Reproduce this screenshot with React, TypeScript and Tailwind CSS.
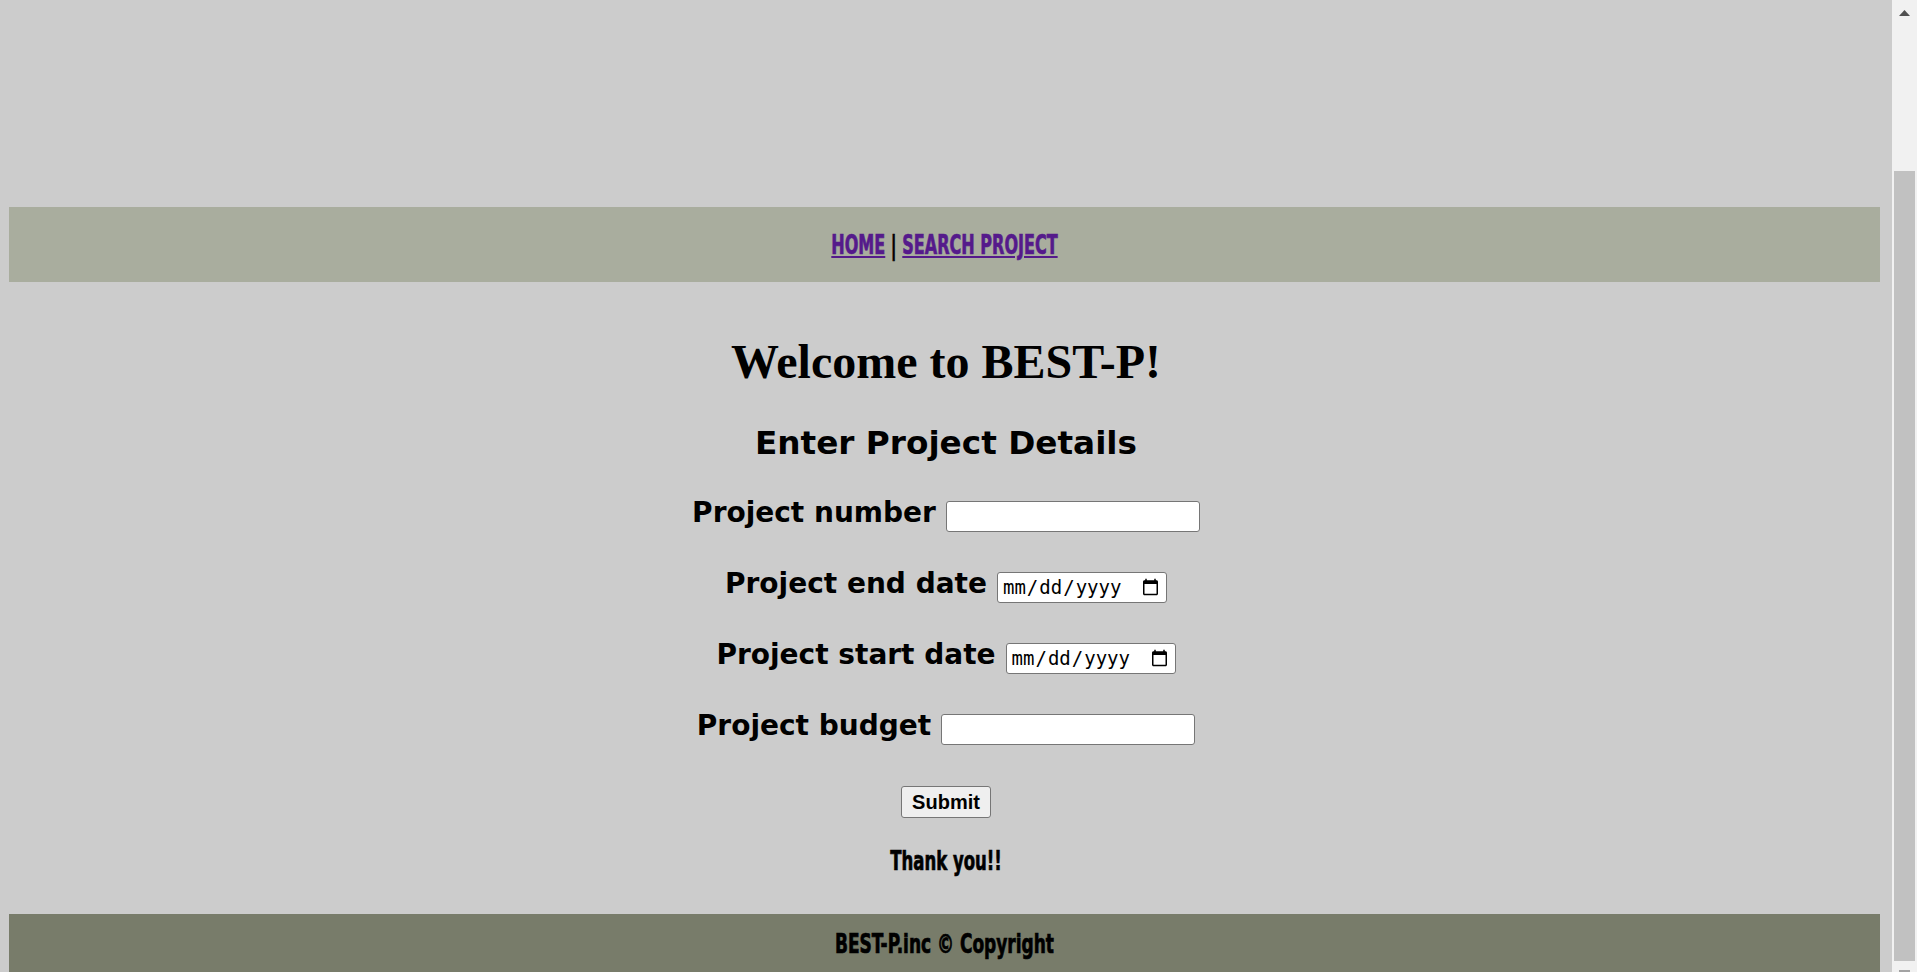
import React from 'react';

const condensed =
  "font-['DejaVu_Sans_Condensed','DejaVu_Sans',sans-serif] font-bold font-stretch-condensed [-webkit-text-stroke:0.7px_currentColor]";

function Row({ label, type }: { label: string; type: 'text' | 'date' }) {
  return (
    <div className="flex items-start justify-center gap-[10px]">
      <label className="font-['DejaVu_Sans',sans-serif] text-[28px] font-bold leading-[24px] text-black">{label}</label>
      {type === 'date' ? (
        <input
          type="date"
          className="h-[31px] w-[170px] rounded-[3px] border-[1.5px] border-[#767676] bg-white px-[4px] font-['DejaVu_Sans_Mono',monospace] text-[19px] text-black"
        />
      ) : (
        <input
          type="text"
          className="h-[31px] w-[254px] rounded-[3px] border-[1.5px] border-[#767676] bg-white px-[4px] text-[20px]"
        />
      )}
    </div>
  );
}

export default function App() {
  return (
    <div className="flex h-[972px] w-full overflow-hidden bg-[#cccccc]">
      {/* page */}
      <div className="flex min-w-0 flex-1 flex-col">
        <div className="h-[207px] shrink-0" />

        <nav className="ml-[9px] mr-[12px] flex h-[75px] shrink-0 items-center justify-center bg-[#a9ad9e]">
          <span className={`inline-block origin-center scale-x-[0.66] text-[27px] leading-none text-black ${condensed}`}>
            <a href="#" className="text-[#551a8b] underline">HOME</a> | <a href="#" className="text-[#551a8b] underline">SEARCH PROJECT</a>
          </span>
        </nav>

        <div className="flex flex-col items-center">
          <h1 className="mt-[56px] font-['Liberation_Serif',serif] text-[48px] font-bold leading-none text-black">Welcome to BEST-P!</h1>
          <h2 className="mt-[41px] font-['DejaVu_Sans',sans-serif] text-[32.7px] font-bold leading-none text-black">Enter Project Details</h2>

          <form className="mt-[41px] flex flex-col items-center" onSubmit={(e) => e.preventDefault()}>
            <div className="flex flex-col gap-[40px]">
              <Row label="Project number" type="text" />
              <Row label="Project end date" type="date" />
              <Row label="Project start date" type="date" />
              <Row label="Project budget" type="text" />
            </div>
            <button
              type="submit"
              className="mt-[41px] h-[32px] w-[90px] rounded-[3px] border-[1.5px] border-[#767676] bg-[#efefef] font-['Liberation_Sans',Arial,sans-serif] text-[20px] font-bold text-black"
            >
              Submit
            </button>
          </form>

          <p className={`mt-[29px] inline-block origin-center scale-x-[0.68] text-[27px] leading-none text-black ${condensed}`}>Thank you!!</p>
        </div>

        <footer className="ml-[9px] mr-[12px] mt-[40px] flex h-[75px] shrink-0 justify-center bg-[#787c6a] pt-[16px]">
          <span className={`inline-block h-[27px] origin-center scale-x-[0.7] text-[27px] leading-none text-black ${condensed}`}>BEST-P.inc © Copyright</span>
        </footer>
      </div>

      {/* scrollbar */}
      <div className="flex w-[25px] shrink-0 flex-col items-center bg-[#f1f1f1]">
        <svg width="11" height="6" viewBox="0 0 11 6" className="mt-[10px]">
          <polygon points="5.5,0 11,6 0,6" fill="#505050" />
        </svg>
        <div className="mt-[155px] h-[790px] w-[21px] bg-[#c1c1c1]" />
        <div className="mt-[9px] h-[2px] w-[11px] bg-[#a3a3a3]" />
      </div>
    </div>
  );
}
